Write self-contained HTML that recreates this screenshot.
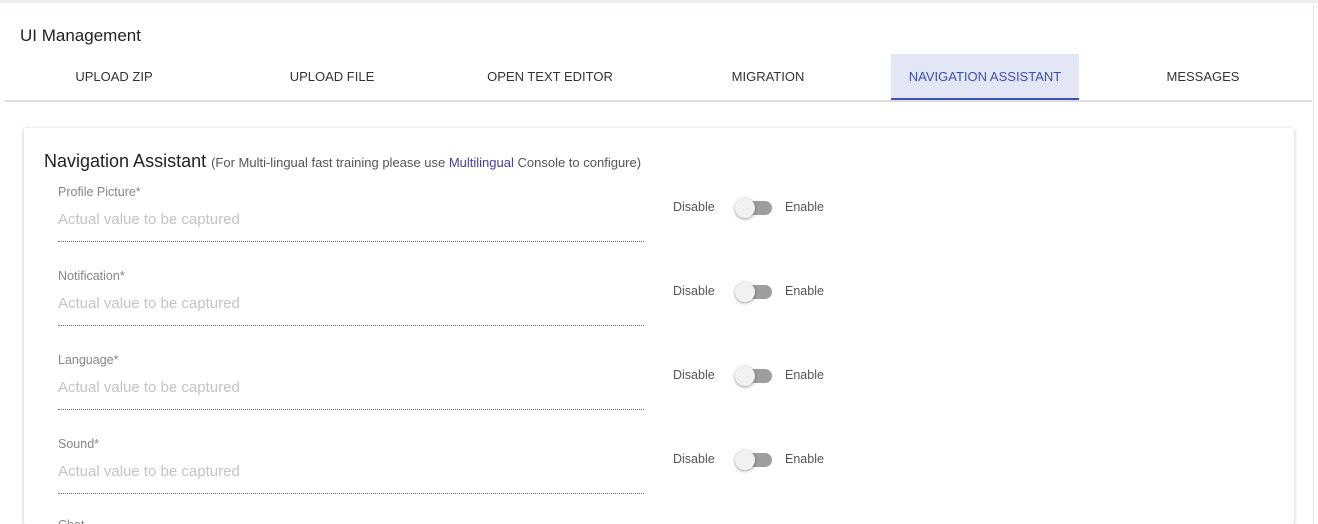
<!DOCTYPE html>
<html style="width:1318px;height:524px;overflow:hidden"><head><style>
*{margin:0;padding:0;box-sizing:border-box}
body{width:1318px;height:524px;overflow:hidden;background:#fff;font-family:"Liberation Sans",sans-serif;position:relative}
.top{position:absolute;left:0;top:0;width:1318px;height:3px;background:#eceef1}
.rl{position:absolute;left:1313px;top:3px;width:1px;height:521px;background:#e6e6e6}
.h{position:absolute;left:20px;top:26px;font-size:17px;color:#222}
.tabs{position:absolute;left:5px;top:54px;width:1307px;height:48px;border-bottom:2px solid #ddd}
.tab{position:absolute;top:0;height:46px;line-height:46px;font-size:13px;color:#333;text-align:center;transform:translateX(-50%);white-space:nowrap}
.act{position:absolute;left:886px;top:0;width:188px;height:46px;background:#e3e6f4;border-bottom:2px solid #3f51b5}
.card{position:absolute;left:24px;top:128px;width:1270px;height:396px;background:#fff;box-shadow:0 1px 4px rgba(0,0,0,.25);border-radius:2px}
.t{position:absolute;left:44px;top:151px;font-size:18px;color:#222;white-space:nowrap}
.t small{font-size:13px;color:#555}
.t b{font-weight:normal;color:#3f3fa0}
.lb{position:absolute;left:58px;font-size:12.5px;color:#888}
.v{position:absolute;left:58px;font-size:15px;color:#c4c4c4}
.ln{position:absolute;left:58px;width:586px;border-top:1px dotted #777}
.d{position:absolute;left:673px;font-size:12.5px;color:#555}
.e{position:absolute;left:785px;font-size:12.5px;color:#555}
.tr{position:absolute;left:738px;width:34px;height:14px;border-radius:7px;background:#9e9e9e}
.th{position:absolute;left:735px;width:20px;height:20px;border-radius:50%;background:#f1f1f1;box-shadow:0 1px 3px rgba(0,0,0,.4)}
</style></head><body>
<div class="top"></div><div class="rl"></div>
<div class="h">UI Management</div>
<div class="tabs">
<div class="act"></div>
<div class="tab" style="left:109px">UPLOAD ZIP</div>
<div class="tab" style="left:327px">UPLOAD FILE</div>
<div class="tab" style="left:545px">OPEN TEXT EDITOR</div>
<div class="tab" style="left:763px">MIGRATION</div>
<div class="tab" style="left:980px;color:#3f4fa8">NAVIGATION ASSISTANT</div>
<div class="tab" style="left:1198px">MESSAGES</div>
</div>
<div class="card"></div>
<div class="t">Navigation Assistant <small>(For Multi-lingual fast training please use <b>Multilingual</b> Console to configure)</small></div>

<div class="lb" style="top:185px">Profile Picture*</div>
<div class="v" style="top:211px">Actual value to be captured</div>
<div class="ln" style="top:241px"></div>
<div class="d" style="top:200px">Disable</div><div class="tr" style="top:201px"></div><div class="th" style="top:198px"></div><div class="e" style="top:200px">Enable</div>

<div class="lb" style="top:269px">Notification*</div>
<div class="v" style="top:295px">Actual value to be captured</div>
<div class="ln" style="top:325px"></div>
<div class="d" style="top:284px">Disable</div><div class="tr" style="top:285px"></div><div class="th" style="top:282px"></div><div class="e" style="top:284px">Enable</div>

<div class="lb" style="top:353px">Language*</div>
<div class="v" style="top:379px">Actual value to be captured</div>
<div class="ln" style="top:409px"></div>
<div class="d" style="top:368px">Disable</div><div class="tr" style="top:369px"></div><div class="th" style="top:366px"></div><div class="e" style="top:368px">Enable</div>

<div class="lb" style="top:437px">Sound*</div>
<div class="v" style="top:463px">Actual value to be captured</div>
<div class="ln" style="top:493px"></div>
<div class="d" style="top:452px">Disable</div><div class="tr" style="top:453px"></div><div class="th" style="top:450px"></div><div class="e" style="top:452px">Enable</div>
<div class="lb" style="top:518px">Chat</div>
</body></html>
